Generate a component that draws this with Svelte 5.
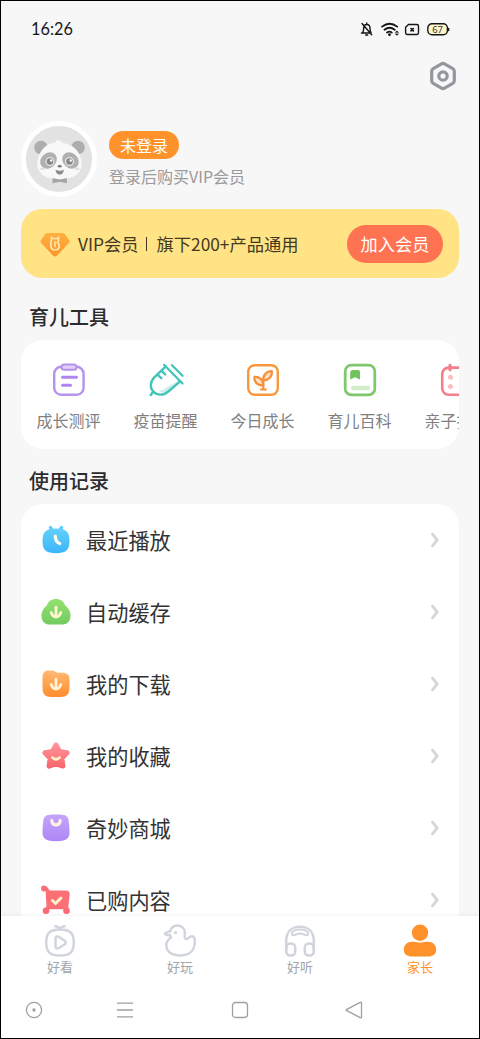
<script lang="ts">
  type Item = { icon: string; label: string };

  const tools: Item[] = [
    { icon: 'clipboard', label: '成长测评' },
    { icon: 'syringe', label: '疫苗提醒' },
    { icon: 'sprout', label: '今日成长' },
    { icon: 'book', label: '育儿百科' },
    { icon: 'calendar', label: '亲子打卡' }
  ];

  const records: Item[] = [
    { icon: 'clock', label: '最近播放' },
    { icon: 'cloud', label: '自动缓存' },
    { icon: 'folder', label: '我的下载' },
    { icon: 'star', label: '我的收藏' },
    { icon: 'bag', label: '奇妙商城' },
    { icon: 'cart', label: '已购内容' }
  ];

  const tabs: Item[] = [
    { icon: 'watch', label: '好看' },
    { icon: 'duck', label: '好玩' },
    { icon: 'headphones', label: '好听' },
    { icon: 'parent', label: '家长' }
  ];

  let active = $state('parent');
</script>

{#snippet toolIcon(name: string)}
  <svg width="36" height="36" viewBox="0 0 36 36" fill="none" stroke-width="2.4" stroke-linecap="round" stroke-linejoin="round">
    {#if name === 'clipboard'}
      <rect x="3.2" y="4.8" width="29.4" height="28" rx="7" stroke="#b592ec" />
      <rect x="10.5" y="2.4" width="15" height="5.4" rx="2.6" fill="#e0d0fb" stroke="#b592ec" stroke-width="2" />
      <path d="M11.5 15.3h14M11.500 23.3h8" stroke="#b184f0" stroke-width="3" />
    {:else if name === 'syringe'}
      <path d="M30 19c-4 3.500-9 3.500-12 7-1.500 1.700-4 2.500-7 2.500 3.500 3.500 9.500 3.500 13-.3l8-7.700z" fill="#cdeeea" />
      <path d="m16 2.800 18.500 18.700M24 3.200l10.500 10.600" stroke="#41c4b9" stroke-width="2.200" />
      <path d="M17.800 4.300 6.800 14.800c-5 4.800-5 11-1.600 14.700 4 4.200 10.600 4.200 15.200-.2l12-10.200M5.200 29.500 2.800 33" stroke="#41c4b9" />
      <path d="m9.500 12.500 3.800 3.700M13.700 8.800l3.600 3.700" stroke="#41c4b9" />
    {:else if name === 'sprout'}
      <rect x="3.200" y="3.200" width="29.600" height="29.600" rx="6.500" stroke="#f9983c" />
      <path d="M18.300 23.500c-5.800.3-9.600-3.800-8.800-8.600 4.800-.7 8.800 2.800 8.800 8.600z" fill="#fde0c0" stroke="#f7903a" stroke-width="2.200" />
      <path d="M18.300 18.500c-.6-5.200 3-9.300 8.500-9.300.7 5.300-3 9-8.500 9.300zM18.300 18v9M16 27.500h4.800" fill="#fde0c0" stroke="#f7903a" stroke-width="2.200" />
    {:else if name === 'book'}
      <rect x="3.200" y="3.200" width="29.600" height="29.600" rx="6" stroke="#7fc86b" stroke-width="2.800" />
      <path d="M10.500 8h5.500a2 2 0 0 1 2 2v7.500L13 15.300l-4.800 2.200v-7A2.400 2.400 0 0 1 10.500 8z" fill="#70c35a" />
      <path d="M11.200 26h14.600" stroke="#d1edc9" stroke-width="4.600" />
    {:else}
      <rect x="3.200" y="5.600" width="29.600" height="27.200" rx="6.500" stroke="#f27f8a" stroke-width="2.600" />
      <path d="M11 3.400v4.400M25 3.400v4.400" stroke="#f27f8a" stroke-width="3.200" />
      <circle cx="11.500" cy="15.300" r="2.500" fill="#fcbcc1" />
      <circle cx="11.500" cy="24.500" r="2.500" fill="#fcbcc1" />
      <circle cx="22.500" cy="15.300" r="2.500" fill="#fcbcc1" />
      <circle cx="22.500" cy="24.500" r="2.500" fill="#fcbcc1" />
    {/if}
  </svg>
{/snippet}

{#snippet recordIcon(name: string)}
  <svg width="32" height="32" viewBox="0 0 32 32" fill="none" stroke-linecap="round" stroke-linejoin="round">
    {#if name === 'clock'}
      <path d="m10.500 3.500 2 3.500M21.500 3.500l-2 3.500" stroke="#5bcdfb" stroke-width="3.400" />
      <path d="M16 4.600c9.600 0 13.500 3 13.500 12.400S26 29.200 16 29.200 2.500 26.400 2.500 17 6.400 4.600 16 4.600z" fill="url(#g-blue)" />
      <path d="M15.300 12c-.1 4.200 1 6 4.500 7.600" stroke="#fffbe9" stroke-width="3.200" />
    {:else if name === 'cloud'}
      <path d="M16 3c4.500 0 7.700 2.200 9 6.200 3.600 2.700 5.500 6.200 5.500 10.300 0 6-3.500 9-8 9h-13c-4.500 0-8-3-8-8.800 0-4.300 2-7.800 5.500-10.500C8.300 5.200 11.500 3 16 3z" fill="url(#g-green)" />
      <path d="M16 11.200v9m-4.800-3.700c1 2.800 2.600 4.500 4.800 4.500s3.800-1.700 4.800-4.500" stroke="#fff8cf" stroke-width="2.900" />
    {:else if name === 'folder'}
      <path d="M9 2.500h2.500c3.500 0 4 2.300 7 2.300H22c5.500 0 7.500 2 7.500 7V20c0 6-3 9-8.500 9H11c-5.500 0-8.500-3-8.500-9v-9.500c0-5.500 1.500-8 6.500-8z" fill="url(#g-orange)" />
      <path d="M16 11.200v9m-4.800-3.700c1 2.800 2.600 4.500 4.800 4.500s3.800-1.700 4.800-4.500" stroke="#fff2d0" stroke-width="2.900" />
    {:else if name === 'star'}
      <path d="m16 5 3.500 6.500 7.600 1.300-5.200 5.500 1 7.800-6.900-2.300-6.900 2.300 1-7.800-5.200-5.500 7.600-1.300z" fill="url(#g-red)" stroke="url(#g-red)" stroke-width="5" />
      <path d="M12.500 17.600c1.800 2.200 5.200 2.200 7 0" stroke="#fff0c8" stroke-width="2.800" />
    {:else if name === 'bag'}
      <path d="M16 2.500c9.500 0 11.800.8 12.700 6.500.5 3.500.8 7 .8 10.500 0 7-3 9.700-13.500 9.700S2.500 26.500 2.500 19.500c0-3.500.3-7 .8-10.500C4.200 3.300 6.500 2.500 16 2.500z" fill="url(#g-purple)" />
      <path d="M11.800 8.700c.7 5.600 7.700 5.600 8.400 0" stroke="#fff2e3" stroke-width="3.200" />
    {:else}
      <path d="M3.800 4.500c2.500-.4 3.700 1.500 4.200 4h17.800c1.700 0 2.200.9 1.900 2.300l-1.500 12.500.6 3.700M7.700 8l.8 15-2.500 4" stroke="#fb7077" stroke-width="4" />
      <path d="M7.500 8h20l-1 17.300H8z" fill="#fb7077" />
      <circle cx="4" cy="4.500" r="3" fill="#fb7077" />
      <circle cx="6" cy="26.800" r="3.300" fill="#fb6a72" />
      <circle cx="26.500" cy="26.800" r="3.300" fill="#fb6a72" />
      <path d="m12.500 16.500 3 3 5.500-5.500" stroke="#fff0c8" stroke-width="3" />
    {/if}
  </svg>
{/snippet}

{#snippet tabIcon(name: string)}
  <svg width="36" height="36" viewBox="0 0 36 36" fill="none" stroke="#d0d4dc" stroke-width="2.500" stroke-linecap="round" stroke-linejoin="round">
    {#if name === 'watch'}
      <path d="M18 6.500c10 0 13.800 3.500 13.800 13S28 32.600 18 32.600 4.200 29 4.200 19.500 8 6.500 18 6.500zM13.500 3.300c2.500.4 4 1.300 4.500 3 .5-1.700 2-2.600 4.500-3" />
      <path d="M13.500 16c0-2.500 1.600-3.200 3.500-2l5.500 3.500c1.600 1.100 1.600 2.900 0 4L17 25c-1.900 1.200-3.500.5-3.500-2z" />
    {:else if name === 'duck'}
      <path d="M8.200 8.300C9.200 4.600 12 2.600 15.300 2.600c5 0 8.200 3.700 7.500 8-.4 2.600-.8 4.900 1.500 5.300 2 .3 3-2.600 5.500-2.600 2.600 0 3.200 2.300 3 5.900-.4 8.300-5.500 13.200-14 13.200-9.300 0-14.500-3.900-14.500-10.400 0-3.300 1.700-5.400 4.800-7.500-.6-.8-.9-1.600-1-2.400-2.300.2-4.700-.3-5.300-1.600C3.200 9.200 6.500 9.400 8.200 8.300z" />
      <circle cx="13.500" cy="9.700" r=".7" stroke-width="1.800" />
    {:else if name === 'headphones'}
      <path d="M4.200 27V18C4.200 8.500 10 3.800 18 3.800S31.800 8.500 31.800 18v9" />
      <path d="M10.300 11.800c-2-2.700 2.300-5.200 7.700-5.200s9.700 2.500 7.700 5.200c-1.600 1.700-3.800-1.200-7.700-1.200s-6.100 2.900-7.700 1.200z" stroke-width="2" />
      <rect x="4.200" y="20.400" width="9" height="12.200" rx="4" />
      <rect x="22.800" y="20.400" width="9" height="12.200" rx="4" />
    {:else}
      <g fill="#ff922b" stroke="none">
        <circle cx="18" cy="9.700" r="8.200" />
        <path d="M10 18.800h2c2 0 3.500.8 6 .8s4-.8 6-.8h2c5 0 8.200 3.500 8.200 8s-3.200 6.800-8.200 6.800H10c-5 0-8.200-2.300-8.200-6.800s3.200-8 8.200-8z" />
      </g>
    {/if}
  </svg>
{/snippet}

<svg class="defs" width="0" height="0" aria-hidden="true">
  <defs>
    <linearGradient id="g-blue" x2="0" y2="1"><stop stop-color="#62d0fb" /><stop offset="1" stop-color="#3bb5fa" /></linearGradient>
    <linearGradient id="g-green" x2="0" y2="1"><stop stop-color="#93e16e" /><stop offset="1" stop-color="#74cb61" /></linearGradient>
    <linearGradient id="g-orange" x2="0" y2="1"><stop stop-color="#ffba75" /><stop offset="1" stop-color="#ff8c2c" /></linearGradient>
    <linearGradient id="g-red" x2="0" y2="1"><stop stop-color="#ff9298" /><stop offset="1" stop-color="#fb6970" /></linearGradient>
    <linearGradient id="g-purple" x2="0" y2="1"><stop stop-color="#c4a5fb" /><stop offset="1" stop-color="#ad86f6" /></linearGradient>
    <linearGradient id="g-gem" x2="0" y2="1"><stop stop-color="#ffb13f" /><stop offset="1" stop-color="#ff9329" /></linearGradient>
  </defs>
</svg>

<div class="phone">
  <header class="status">
    <span class="time">16:26</span>
    <svg width="90" height="16" viewBox="0 0 90 16" fill="none" stroke="#151515" stroke-width="1.400" stroke-linecap="round" stroke-linejoin="round">
      <path d="M1.500 12h9.300M2.700 11.500c1-1.500.9-2.500.9-4 0-2.500 1.300-4 3.200-4 2 0 3.200 1.500 3.200 4 0 1.500 0 2.500 1 4M6.800 3.300V2M2 2.500l9.700 11.300M5.700 14h2" />
      <path d="M22 5.600c4.700-3.500 10.500-3.500 15.200 0M24.500 8.700c3.200-2.400 7-2.400 10.200 0" stroke-width="1.800" />
      <path d="M27 11.600c1.700-1.200 3.500-1.200 4.800 0" stroke-width="1.800" />
      <circle cx="29.500" cy="13.700" r=".7" fill="#151515" />
      <path d="m35.500 11.200 1.400-1.400 1.400 1.400zM35.500 13l1.400 1.400 1.400-1.400z" fill="#151515" stroke-width=".5" />
      <path d="M48.500 3.500h8.300q1.700 0 1.700 1.700v6.600q0 1.700-1.700 1.700H47.300q-1.700 0-1.700-1.700V6.300z" />
      <path d="m51 7.500 2.400 2.400m0-2.400L51 9.900" stroke-width="1.600" />
      <rect x="67.800" y="2.800" width="19.600" height="11" rx="4.200" fill="#fff6cf" />
      <path d="M88.600 7.500v2" />
      <text x="77.600" y="11.800" text-anchor="middle" class="battery">67</text>
    </svg>
  </header>

  <div class="toolbar">
    <button type="button" class="settings" aria-label="设置">
      <svg width="32" height="32" viewBox="0 0 32 32" fill="none" stroke="#93979d" stroke-width="3.200" stroke-linejoin="round">
        <path d="m14.500 3.900-8.300 4.800a3 3 0 0 0-1.500 2.600v9.400a3 3 0 0 0 1.500 2.600l8.300 4.800a3 3 0 0 0 3 0l8.300-4.800a3 3 0 0 0 1.500-2.600v-9.400a3 3 0 0 0-1.500-2.600l-8.300-4.800a3 3 0 0 0-3 0z" />
        <circle cx="16" cy="16" r="4.200" />
      </svg>
    </button>
  </div>

  <section class="profile">
    <div class="avatar">
      <svg width="66" height="66" viewBox="0 0 66 66">
        <g fill="#adadad">
          <circle cx="15" cy="21.500" r="6.800" />
          <circle cx="52" cy="21.500" r="6.800" />
        </g>
        <path d="M29 16.500c.5-1.500 2-2.500 3.500-2.800l.8 1.500c1-.5 2-.5 3-.2l-.8 1.700C47 17.500 55 26 55.800 37c.3 11-9.500 16.500-22.300 16.500S11 48 11.200 37C12 26 19.500 17.500 29 16.500z" fill="#f8f8f8" />
        <g fill="#b0b0b0">
          <ellipse cx="22.500" cy="34.500" rx="9" ry="7.400" transform="rotate(-42 22.500 34.500)" />
          <ellipse cx="44.500" cy="34.500" rx="9" ry="7.400" transform="rotate(42 44.500 34.500)" />
        </g>
        <g fill="#858585" stroke="#e6e6e6" stroke-width="1.300">
          <circle cx="24" cy="35.500" r="3.900" />
          <circle cx="43.500" cy="35.500" r="3.900" />
        </g>
        <circle cx="25.200" cy="34.500" r="1.200" fill="#fff" />
        <circle cx="44.700" cy="34.500" r="1.200" fill="#fff" />
        <ellipse cx="33.700" cy="40.300" rx="2" ry="1.200" fill="#777" />
        <path d="M29.500 43.800q4.200 1.800 8.400 0-.7 4.900-4.200 4.900t-4.200-4.900z" fill="#8d8d8d" />
        <ellipse cx="16.500" cy="42.800" rx="2.800" ry="1.300" fill="#e2e2e2" />
        <ellipse cx="51" cy="42.800" rx="2.800" ry="1.300" fill="#e2e2e2" />
        <path d="m26.500 52 7.200 1.500 7.200-1.500v5.200l-7.200-1.500-7.200 1.500z" fill="#a6a6a6" />
      </svg>
    </div>
    <div class="who">
      <button type="button" class="login">未登录</button>
      <p>登录后购买VIP会员</p>
    </div>
  </section>

  <section class="vip">
    <svg width="32" height="28" viewBox="0 0 32 28">
      <path d="M8.500 3h15c1 0 1.700.3 2.400 1.200l4 5.600c.8 1.200.7 2.300-.3 3.400L18 25.500c-1.300 1.200-2.700 1.200-4 0L2.400 13.200c-1-1.100-1.100-2.200-.3-3.400l4-5.600C6.800 3.300 7.500 3 8.500 3z" fill="url(#g-gem)" />
      <path d="M12.700 8.500c-.9 2-.9 4-.9 6.500 0 3.500 1.500 5 4.200 5s4.200-1.500 4.200-4c0-1.700-.6-2.800-1.700-3.500 1.200-1 1.200-2.700.7-4.300M12.700 8.500h5.800M12.300 7l.4 1.500M19.500 7l-.3 1.500M16 12v4.500" fill="none" stroke="#ffe9b0" stroke-width="1.700" stroke-linecap="round" />
    </svg>
    <p><span>VIP会员</span><i></i><span>旗下200+产品通用</span></p>
    <button type="button" class="join">加入会员</button>
  </section>

  <h2>育儿工具</h2>
  <section class="tools">
    {#each tools as tool (tool.icon)}
      <div class="tool">
        {@render toolIcon(tool.icon)}
        <span>{tool.label}</span>
      </div>
    {/each}
  </section>

  <h2 class="second">使用记录</h2>
  <section class="records">
    {#each records as record (record.icon)}
      <div class="record">
        {@render recordIcon(record.icon)}
        <span>{record.label}</span>
        <svg class="chevron" width="12" height="18" viewBox="0 0 12 18" fill="none" stroke="#d6d6d8" stroke-width="2.800" stroke-linecap="round" stroke-linejoin="round">
          <path d="m3.500 3.200 4.700 5.800-4.700 5.800" />
        </svg>
      </div>
    {/each}
  </section>

  <footer>
    <nav class="tabs">
      {#each tabs as tab (tab.icon)}
        <button type="button" class:active={active === tab.icon} onclick={() => (active = tab.icon)}>
          {@render tabIcon(tab.icon)}
          <span>{tab.label}</span>
        </button>
      {/each}
    </nav>
    <div class="system">
      <svg width="20" height="20" viewBox="0 0 20 20"><circle cx="10" cy="10" r="7.600" /><circle cx="10" cy="10" r="1" class="dot" /></svg>
      <svg class="menu" width="20" height="20" viewBox="0 0 20 20"><path d="M2 3.200h16M2 10h16M2 16.800h16" /></svg>
      <svg class="home" width="20" height="20" viewBox="0 0 20 20"><rect x="2.500" y="2.500" width="15" height="15" rx="3" /></svg>
      <svg class="back" width="20" height="20" viewBox="0 0 20 20"><path d="M16.200 2.300q1.300-.6 1.300.8v13.800q0 1.400-1.300.8L2.800 10.700q-1.200-.7 0-1.400z" /></svg>
    </div>
  </footer>
</div>

<style>
  :global(body) {
    margin: 0;
  }
  .defs {
    position: absolute;
  }
  .phone {
    box-sizing: border-box;
    width: 480px;
    height: 1039px;
    display: flex;
    flex-direction: column;
    overflow: hidden;
    border: 1px solid #000;
    background: #f7f7f8;
    color: #2c2c2e;
    font-family: 'Noto Sans CJK SC', sans-serif;
  }
  svg {
    display: block;
    flex: none;
  }
  button {
    border: 0;
    padding: 0;
    background: none;
    font: inherit;
  }
  p {
    margin: 0;
    white-space: nowrap;
  }

  .status {
    flex: none;
    height: 56px;
    display: flex;
    align-items: center;
    justify-content: space-between;
    padding: 0 29px 0 30px;
  }
  .time {
    font: 16.3px/20px Lato, sans-serif;
    color: #171717;
  }
  .battery {
    font: 9.5px 'Noto Sans', sans-serif;
    fill: #3a3420;
    stroke: none;
  }

  .toolbar {
    flex: none;
    height: 38px;
    display: flex;
    align-items: center;
    justify-content: flex-end;
    padding-right: 20px;
  }

  .profile {
    flex: none;
    display: flex;
    align-items: center;
    gap: 12px;
    height: 76px;
    margin: 26px 20px 0;
  }
  .avatar {
    width: 66px;
    height: 66px;
    border: 5px solid #fff;
    border-radius: 50%;
    background: #e2e2e2;
    overflow: hidden;
  }
  .login {
    display: block;
    width: 70px;
    height: 28px;
    border-radius: 14px;
    background: #ff922b;
    color: #fff;
    font-size: 16px;
    line-height: 28px;
  }
  .who p {
    margin-top: 6px;
    font-size: 16px;
    line-height: 23px;
    color: #9a9a9a;
  }

  .vip {
    flex: none;
    display: flex;
    align-items: center;
    box-sizing: border-box;
    height: 69px;
    margin: 12px 20px 0;
    padding: 0 16px 0 18px;
    border-radius: 21px;
    background: #ffe385;
  }
  .vip p {
    display: flex;
    align-items: center;
    flex: 1;
    margin-left: 7px;
    font-size: 17.3px;
    line-height: 24px;
    color: #43391f;
  }
  .vip i {
    width: 1px;
    height: 14px;
    margin: 0 10px 0 7px;
    background: #43391f;
  }
  .join {
    width: 96px;
    height: 38px;
    border-radius: 19px;
    background: #ff7352;
    color: #fff;
    font-size: 17.2px;
    line-height: 38px;
  }

  h2 {
    flex: none;
    margin: 24px 0 0 28px;
    font-size: 20px;
    font-weight: 500;
    line-height: 30px;
  }
  h2.second {
    margin-top: 17px;
  }

  .tools {
    flex: none;
    display: flex;
    box-sizing: border-box;
    height: 109px;
    margin: 8px 20px 0;
    padding-top: 22px;
    border-radius: 22px;
    background: #fff;
    overflow: hidden;
  }
  .tool {
    flex: none;
    width: 97px;
    display: flex;
    flex-direction: column;
    align-items: center;
    gap: 10px;
    font-size: 16px;
    line-height: 24px;
    color: #808080;
    white-space: nowrap;
  }
  .tool:first-child {
    margin-left: -1px;
  }

  .records {
    flex: 1;
    min-height: 0;
    margin: 8px 20px 0;
    border-radius: 22px 22px 0 0;
    background: #fff;
    overflow: hidden;
  }
  .record {
    display: flex;
    align-items: center;
    height: 72px;
    padding: 0 18px 0 19px;
    font-size: 21.2px;
    line-height: 32px;
    color: #333;
  }
  .record span {
    flex: 1;
    margin-left: 14px;
  }

  footer {
    position: relative;
    flex: none;
    height: 122px;
    background: #fff;
    box-shadow: 0 -1px 4px rgba(0, 0, 0, 0.06);
  }
  .tabs {
    display: flex;
    height: 62px;
    margin: 0 -1px;
  }
  .tabs button {
    flex: 1;
    display: flex;
    flex-direction: column;
    align-items: center;
    padding-top: 7px;
    font-size: 13px;
    line-height: 16px;
    color: #a2a5aa;
  }
  .tabs .active {
    color: #ff922b;
  }
  .system {
    display: flex;
    align-items: center;
    height: 63px;
    padding-left: 23px;
  }
  .system svg {
    fill: none;
    stroke: #a0a0a0;
    stroke-width: 1.3;
    stroke-linejoin: round;
  }
  .system .menu {
    margin-left: 71px;
  }
  .system .home {
    margin-left: 95px;
  }
  .system .back {
    margin-left: 94px;
  }
  .system .dot {
    fill: #888;
  }
</style>
